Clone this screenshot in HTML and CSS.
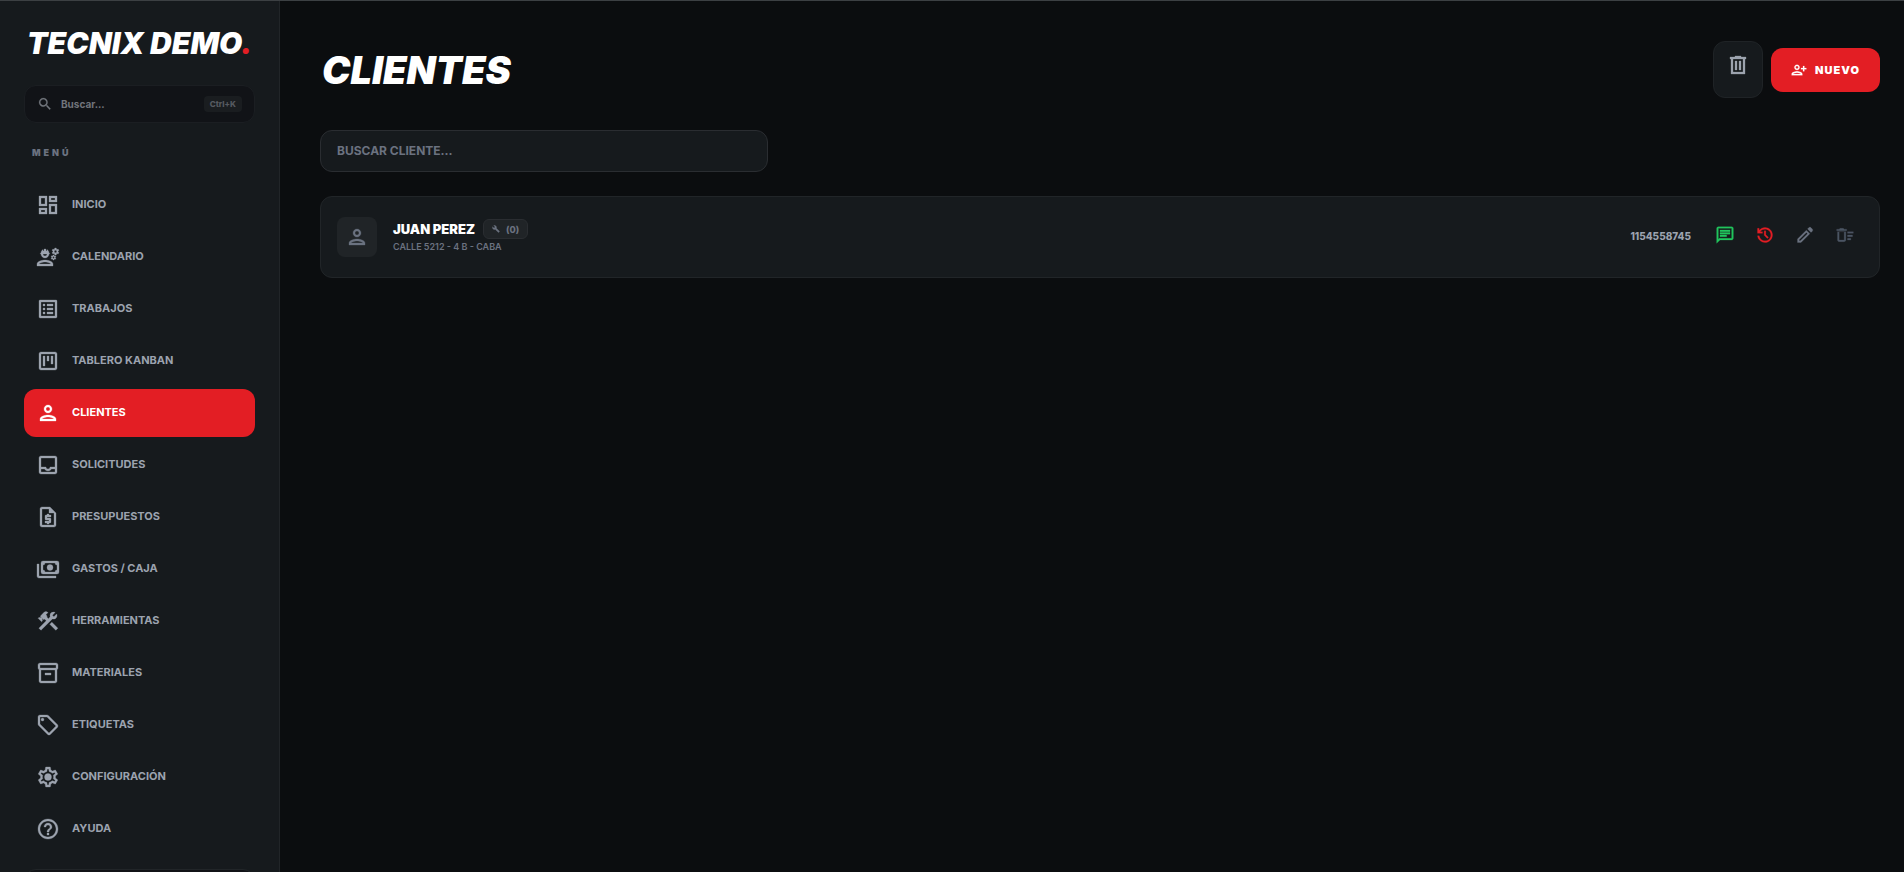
FILE: index.html
```html
<!DOCTYPE html>
<html lang="es">
<head>
    <meta charset="UTF-8">
    <meta name="viewport" content="width=device-width, initial-scale=1.0">
    <title>Tecnix Demo - Clientes</title>
    <link rel="stylesheet" href="styles.css">
</head>
<body>
    <div class="app">
        <aside class="sidebar">
            <a class="logo" href="#">TECNIX DEMO<span class="dot">.</span></a>

            <button class="quick-search" type="button">
                <svg class="icon icon-sm" viewBox="0 0 24 24"><path d="M15.5 14h-.79l-.28-.27A6.47 6.47 0 0 0 16 9.5 6.5 6.5 0 1 0 9.5 16c1.61 0 3.09-.59 4.23-1.57l.27.28v.79l5 4.99L20.49 19l-4.99-5zm-6 0C7.01 14 5 11.99 5 9.5S7.01 5 9.5 5 14 7.01 14 9.5 11.99 14 9.5 14z"/></svg>
                <span>Buscar...</span>
                <kbd>Ctrl+K</kbd>
            </button>

            <p class="menu-label">MENÚ</p>

            <nav class="menu">
                <a class="menu-item" href="#">
                    <svg class="icon" viewBox="0 0 24 24"><path d="M19 5v2h-4V5h4M9 5v6H5V5h4m10 8v6h-4v-6h4M9 17v2H5v-2h4M21 3h-8v6h8V3zM11 3H3v10h8V3zm10 8h-8v10h8V11zm-10 4H3v6h8v-6z"/></svg>
                    <span>INICIO</span>
                </a>
                <a class="menu-item" href="#">
                    <svg class="icon" viewBox="0 0 24 24"><path d="M9 15c-2.67 0-8 1.34-8 4v2h16v-2c0-2.66-5.33-4-8-4zm-6 4c.22-.72 3.31-2 6-2 2.7 0 5.8 1.29 6 2H3zM4.74 9H5c0 2.21 1.79 4 4 4s4-1.79 4-4h.26c.27 0 .49-.22.49-.49v-.02c0-.27-.22-.49-.49-.49H13c0-1.48-.81-2.75-2-3.45v.95c0 .28-.22.5-.5.5S10 5.78 10 5.5V4.14C9.68 4.06 9.35 4 9 4s-.68.06-1 .14V5.5c0 .28-.22.5-.5.5S7 5.78 7 5.5v-.95C5.81 5.25 5 6.52 5 8h-.26c-.27 0-.49.22-.49.49v.03c0 .26.22.48.49.48zM11 9c0 1.1-.9 2-2 2s-2-.9-2-2h4zM21.98 6.23l.93-.83-.75-1.3-1.19.39c-.14-.11-.3-.2-.47-.27L20.25 3h-1.5l-.25 1.22c-.17.07-.33.16-.48.27l-1.18-.39-.75 1.3.93.83c-.02.17-.02.35 0 .52l-.93.85.75 1.3 1.2-.38c.13.1.28.18.43.25l.28 1.23h1.5l.27-1.22c.16-.07.3-.15.44-.25l1.19.38.75-1.3-.93-.85c.03-.19.02-.36.01-.53zM19.5 7.75a1.25 1.25 0 1 1 0-2.5 1.25 1.25 0 0 1 0 2.5zM19.4 10.79l-.85.28c-.1-.08-.21-.14-.33-.19l-.18-.88h-1.07l-.18.87c-.12.05-.24.12-.34.19l-.84-.28-.54.93.66.59c-.01.13-.01.25 0 .37l-.66.61.54.93.86-.27c.1.07.2.13.31.18l.18.88h1.07l.19-.87c.11-.05.22-.11.32-.18l.85.27.54-.93-.66-.61c.01-.13.01-.25 0-.37l.66-.59-.53-.93zm-1.9 2.6a.89.89 0 1 1 0-1.78.89.89 0 0 1 0 1.78z"/></svg>
                    <span>CALENDARIO</span>
                </a>
                <a class="menu-item" href="#">
                    <svg class="icon" viewBox="0 0 24 24"><path d="M11 7h6v2h-6zm0 4h6v2h-6zm0 4h6v2h-6zM7 7h2v2H7zm0 4h2v2H7zm0 4h2v2H7zM20.1 3H3.9c-.5 0-.9.4-.9.9v16.2c0 .4.4.9.9.9h16.2c.4 0 .9-.5.9-.9V3.9c0-.5-.5-.9-.9-.9zM19 19H5V5h14v14z"/></svg>
                    <span>TRABAJOS</span>
                </a>
                <a class="menu-item" href="#">
                    <svg class="icon" viewBox="0 0 24 24"><path d="M19 3H5c-1.1 0-2 .9-2 2v14c0 1.1.9 2 2 2h14c1.1 0 2-.9 2-2V5c0-1.1-.9-2-2-2zm0 16H5V5h14v14zM7 7h2v10H7zm4 0h2v5h-2zm4 0h2v8h-2z"/></svg>
                    <span>TABLERO KANBAN</span>
                </a>
                <a class="menu-item active" href="#" aria-current="page">
                    <svg class="icon" viewBox="0 0 24 24"><path d="M12 6c1.1 0 2 .9 2 2s-.9 2-2 2-2-.9-2-2 .9-2 2-2m0 10c2.7 0 5.8 1.29 6 2H6c.23-.72 3.31-2 6-2m0-12C9.79 4 8 5.79 8 8s1.79 4 4 4 4-1.79 4-4-1.79-4-4-4zm0 10c-2.67 0-8 1.34-8 4v2h16v-2c0-2.66-5.33-4-8-4z"/></svg>
                    <span>CLIENTES</span>
                </a>
                <a class="menu-item" href="#">
                    <svg class="icon" viewBox="0 0 24 24"><path d="M19 3H5c-1.1 0-2 .9-2 2v14c0 1.1.9 2 2 2h14c1.1 0 2-.9 2-2V5c0-1.1-.9-2-2-2zm0 16H5v-3h3.56c.69 1.19 1.97 2 3.45 2s2.75-.81 3.45-2H19v3zm0-5h-4.99c0 1.1-.9 2-2 2s-2-.9-2-2H5V5h14v9z"/></svg>
                    <span>SOLICITUDES</span>
                </a>
                <a class="menu-item" href="#">
                    <svg class="icon" viewBox="0 0 24 24"><path d="M14 2H6c-1.1 0-2 .9-2 2v16c0 1.1.9 2 2 2h12c1.1 0 2-.9 2-2V8l-6-6zM6 20V4h7v4h5v12H6zm5-1h2v-1h1c.55 0 1-.45 1-1v-3c0-.55-.45-1-1-1h-3v-1h4v-2h-2V9h-2v1h-1c-.55 0-1 .45-1 1v3c0 .55.45 1 1 1h3v1H9v2h2v1z"/></svg>
                    <span>PRESUPUESTOS</span>
                </a>
                <a class="menu-item" href="#">
                    <svg class="icon" viewBox="0 0 24 24"><path fill-rule="evenodd" d="M7 4h14a2 2 0 0 1 2 2v9a2 2 0 0 1-2 2H7a2 2 0 0 1-2-2V6a2 2 0 0 1 2-2zm2 2a2 2 0 0 1-2 2v5a2 2 0 0 1 2 2h10a2 2 0 0 1 2-2V8a2 2 0 0 1-2-2H9zM1 7h2v12h17v2H3c-1.1 0-2-.9-2-2V7z"/><circle cx="14" cy="10.5" r="3"/></svg>
                    <span>GASTOS / CAJA</span>
                </a>
                <a class="menu-item" href="#">
                    <svg class="icon" viewBox="0 0 24 24"><path d="M13.78 15.3l6 6 2.11-2.16-6-6-2.11 2.16zM17.5 10.1c-.39 0-.81-.05-1.14-.19L4.97 21.25l-2.11-2.11 7.41-7.4-1.78-1.78-.7.7-1.45-1.41v2.86l-.7.7-3.52-3.56.7-.7h2.81l-1.4-1.41 3.56-3.56a2.976 2.976 0 0 1 4.22 0L9.89 5.74l1.41 1.4-.71.71 1.79 1.78 1.82-1.88c-.14-.33-.2-.75-.2-1.12a3.49 3.49 0 0 1 3.5-3.52c.59 0 1.11.14 1.58.42L16.41 6.2l1.5 1.5 2.67-2.67c.28.47.42.97.42 1.6 0 1.92-1.55 3.47-3.5 3.47z"/></svg>
                    <span>HERRAMIENTAS</span>
                </a>
                <a class="menu-item" href="#">
                    <svg class="icon" viewBox="0 0 24 24"><path d="M20 2H4c-1 0-2 .9-2 2v3.01c0 .72.43 1.34 1 1.69V20c0 1.1 1.1 2 2 2h14c.9 0 2-.9 2-2V8.7c.57-.35 1-.97 1-1.69V4c0-1.1-1-2-2-2zm-1 18H5V9h14v11zm1-13H4V4h16v3zM9 12h6v2H9z"/></svg>
                    <span>MATERIALES</span>
                </a>
                <a class="menu-item" href="#">
                    <svg class="icon" viewBox="0 0 24 24"><path d="M21.41 11.58l-9-9C12.05 2.22 11.55 2 11 2H4c-1.1 0-2 .9-2 2v7c0 .55.22 1.05.59 1.42l9 9c.36.36.86.58 1.41.58s1.05-.22 1.41-.59l7-7c.37-.36.59-.86.59-1.41s-.23-1.06-.59-1.42zM13 20.01L4 11V4h7v-.01l9 9-7 7.02z"/><circle cx="6.5" cy="6.5" r="1.5"/></svg>
                    <span>ETIQUETAS</span>
                </a>
                <a class="menu-item" href="#">
                    <svg class="icon" viewBox="0 0 24 24"><path d="M19.43 12.98c.04-.32.07-.64.07-.98s-.03-.66-.07-.98l2.11-1.65c.19-.15.24-.42.12-.64l-2-3.46a.5.5 0 0 0-.61-.22l-2.49 1c-.52-.4-1.08-.73-1.69-.98l-.38-2.65A.488.488 0 0 0 14 2h-4c-.25 0-.46.18-.49.42l-.38 2.65c-.61.25-1.17.59-1.69.98l-2.49-1a.5.5 0 0 0-.61.22l-2 3.46c-.13.22-.07.49.12.64l2.11 1.65c-.04.32-.07.65-.07.98s.03.66.07.98l-2.11 1.65c-.19.15-.24.42-.12.64l2 3.46c.12.22.39.3.61.22l2.49-1c.52.4 1.08.73 1.69.98l.38 2.65c.03.24.24.42.49.42h4c.25 0 .46-.18.49-.42l.38-2.65c.61-.25 1.17-.59 1.69-.98l2.49 1c.23.09.49 0 .61-.22l2-3.46c.12-.22.07-.49-.12-.64l-2.11-1.65zm-1.98-1.71c.04.31.05.52.05.73s-.02.43-.05.73l-.14 1.13.89.7 1.08.84-.7 1.21-1.27-.51-1.04-.42-.9.68c-.43.32-.84.56-1.25.73l-1.06.43-.16 1.13-.2 1.35h-1.4l-.19-1.35-.16-1.13-1.06-.43c-.43-.18-.83-.41-1.23-.71l-.91-.7-1.06.43-1.27.51-.7-1.21 1.08-.84.89-.7-.14-1.13c-.03-.31-.05-.54-.05-.74s.02-.43.05-.73l.14-1.13-.89-.7-1.08-.84.7-1.21 1.27.51 1.04.42.9-.68c.43-.32.84-.56 1.25-.73l1.06-.43.16-1.13.2-1.35h1.39l.19 1.35.16 1.13 1.06.43c.43.18.83.41 1.23.71l.91.7 1.06-.43 1.27-.51.7 1.21-1.07.85-.89.7.14 1.13z"/><circle cx="12" cy="12" r="3.5"/></svg>
                    <span>CONFIGURACIÓN</span>
                </a>
                <a class="menu-item" href="#">
                    <svg class="icon" viewBox="0 0 24 24"><path d="M11 18h2v-2h-2v2zm1-16C6.48 2 2 6.48 2 12s4.48 10 10 10 10-4.48 10-10S17.52 2 12 2zm0 18c-4.41 0-8-3.59-8-8s3.59-8 8-8 8 3.59 8 8-3.59 8-8 8zm0-14c-2.21 0-4 1.79-4 4h2c0-1.1.9-2 2-2s2 .9 2 2c0 2-3 1.75-3 5h2c0-2.25 3-2.5 3-5 0-2.21-1.79-4-4-4z"/></svg>
                    <span>AYUDA</span>
                </a>
            </nav>

            <div class="sidebar-footer"></div>
        </aside>

        <main class="content">
            <header class="page-header">
                <h1>CLIENTES</h1>
                <div class="header-actions">
                    <button class="trash-btn" type="button" aria-label="Papelera">
                        <svg class="icon" viewBox="0 0 24 24"><path fill-rule="evenodd" d="M5 21V6H4V4h5V3h6v1h5v2h-1v15H5zM7 6v13h10V6H7zm2 2h2v9H9V8zm4 0h2v9h-2V8z"/></svg>
                    </button>
                    <button class="new-btn" type="button">
                        <svg class="icon icon-sm" viewBox="0 0 24 24"><path d="M9 6c1.1 0 2 .9 2 2s-.9 2-2 2-2-.9-2-2 .9-2 2-2m0 10c2.7 0 5.8 1.29 6 2H3c.23-.72 3.31-2 6-2M9 4C6.79 4 5 5.79 5 8s1.79 4 4 4 4-1.79 4-4-1.79-4-4-4zm0 10c-2.67 0-8 1.34-8 4v2h16v-2c0-2.66-5.33-4-8-4zM18 6h2v3h3v2h-3v3h-2v-3h-3V9h3z"/></svg>
                        NUEVO
                    </button>
                </div>
            </header>

            <input class="client-search" type="search" placeholder="BUSCAR CLIENTE..." aria-label="Buscar cliente">

            <article class="client">
                <div class="avatar">
                    <svg class="icon" viewBox="0 0 24 24"><path d="M12 6c1.1 0 2 .9 2 2s-.9 2-2 2-2-.9-2-2 .9-2 2-2m0 10c2.7 0 5.8 1.29 6 2H6c.23-.72 3.31-2 6-2m0-12C9.79 4 8 5.79 8 8s1.79 4 4 4 4-1.79 4-4-1.79-4-4-4zm0 10c-2.67 0-8 1.34-8 4v2h16v-2c0-2.66-5.33-4-8-4z"/></svg>
                </div>
                <div class="client-info">
                    <div class="client-name">
                        <h2>JUAN PEREZ</h2>
                        <button class="jobs" type="button">
                            <svg class="icon icon-xs" viewBox="0 0 24 24"><path fill-rule="evenodd" d="M22.6 18.9l-9.1-9.1c.9-2.3.4-5-1.5-6.9-2-2-5-2.4-7.4-1.3L9 6 6 9 1.6 4.7C.4 7.1.9 10.1 2.9 12.1c1.9 1.9 4.6 2.4 6.9 1.5l9.1 9.1c.4.4 1 .4 1.4 0l2.3-2.3c.5-.4.5-1.1 0-1.5z"/></svg>
                            (0)
                        </button>
                    </div>
                    <p class="address">CALLE 5212 - 4 B - CABA</p>
                </div>
                <span class="phone">1154558745</span>
                <div class="client-actions">
                    <button class="chat" type="button" aria-label="Mensaje">
                        <svg class="icon icon-md" viewBox="0 0 24 24"><path d="M20 2H4c-1.1 0-2 .9-2 2v18l4-4h14c1.1 0 2-.9 2-2V4c0-1.1-.9-2-2-2zm0 14H5.17L4 17.17V4h16v12zM6 12h8v2H6zm0-3h12v2H6zm0-3h12v2H6z"/></svg>
                    </button>
                    <button class="history" type="button" aria-label="Historial">
                        <svg class="icon icon-md" viewBox="0 0 24 24"><path d="M12 21c-2.3 0-4.3-.8-6-2.3S3.3 15.3 3.05 13H5.1c.23 1.73 1 3.17 2.31 4.3S10.25 19 12 19c1.95 0 3.6-.68 4.96-2.04S19 13.95 19 12s-.68-3.6-2.04-4.96S13.95 5 12 5c-1.15 0-2.23.27-3.23.8S6.93 7.07 6.25 8H9v2H3V4h2v2.35c.85-1.07 1.89-1.89 3.11-2.48S10.63 3 12 3c1.25 0 2.42.24 3.51.71s2.04 1.12 2.85 1.93 1.46 1.76 1.93 2.85S21 10.75 21 12s-.24 2.42-.71 3.51-1.12 2.04-1.93 2.85-1.76 1.46-2.85 1.93S13.25 21 12 21zm2.8-4.8L11 12.4V7h2v4.6l3.2 3.2-1.4 1.4z"/></svg>
                    </button>
                    <button class="edit" type="button" aria-label="Editar">
                        <svg class="icon icon-md" viewBox="0 0 24 24"><path d="M5 19h1.4l8.63-8.63-1.4-1.4L5 17.6V19zM19.3 8.93l-4.25-4.2 1.4-1.4c.38-.39.85-.58 1.41-.58s1.03.19 1.42.58l1.4 1.4c.38.38.58.85.6 1.39s-.17 1-.55 1.39L19.3 8.93zM17.85 10.4L7.25 21H3v-4.25l10.6-10.6 4.25 4.25z"/></svg>
                    </button>
                    <button class="remove" type="button" aria-label="Eliminar">
                        <svg class="icon icon-md" viewBox="0 0 24 24"><path d="M15 16h4v2h-4zm0-8h7v2h-7zm0 4h6v2h-6zM3 18c0 1.1.9 2 2 2h6c1.1 0 2-.9 2-2V8H3v10zm2-10h6v10H5V8zm5-4H6L5 5H2v2h12V5h-3z" fill-rule="evenodd"/></svg>
                    </button>
                </div>
            </article>
        </main>
    </div>
</body>
</html>
```
FILE: styles.css
```css
* {
    box-sizing: border-box;
}
body {
    margin: 0;
    font-family: Inter, 'Liberation Sans', sans-serif;
    background: #0b0d0f;
    color: white;
}
button {
    font-family: inherit;
    color: inherit;
    background: none;
    border: none;
    padding: 0;
    cursor: pointer;
}
h1, h2, p {
    margin: 0;
}
.app {
    display: flex;
    height: 100vh;
    overflow: hidden;
    border-top: 1px solid #3c4043;
}
.icon {
    width: 24px;
    height: 24px;
    fill: currentColor;
    stroke: currentColor;
    stroke-width: 0.3;
    flex-shrink: 0;
}
.icon-md {
    width: 20px;
    height: 20px;
}
.icon-sm {
    width: 16px;
    height: 16px;
}
.icon-xs {
    width: 8px;
    height: 8px;
}

/* Sidebar */
.sidebar {
    width: 280px;
    flex-shrink: 0;
    padding: 24px;
    background: #161a1d;
    border-right: 1px solid #212528;
    overflow: hidden;
}
.logo {
    display: block;
    padding-left: 3px;
    font-size: 30px;
    line-height: 36px;
    font-weight: 900;
    font-style: italic;
    color: white;
    text-decoration: none;
    white-space: nowrap;
}
.dot {
    color: #e31e24;
}
.quick-search {
    display: flex;
    align-items: center;
    gap: 8px;
    width: 100%;
    height: 38px;
    margin-top: 24px;
    padding: 0 12px;
    border: 1px solid #1b1e22;
    border-radius: 12px;
    background: #111317;
    color: #71757c;
    font-size: 10px;
    font-weight: 700;
}
.quick-search kbd {
    margin-left: auto;
    padding: 0 6px;
    border-radius: 4px;
    background: #1a1d20;
    color: #565a60;
    font-family: inherit;
    font-size: 8px;
    line-height: 16px;
    font-weight: 800;
}
.menu-label {
    margin: 24px 0 22px 8px;
    font-size: 9px;
    line-height: 12px;
    font-weight: 900;
    letter-spacing: 3px;
    color: #6b7280;
}
.menu {
    display: flex;
    flex-direction: column;
    gap: 4px;
}
.menu-item {
    display: flex;
    align-items: center;
    gap: 12px;
    height: 48px;
    padding: 0 12px;
    border-radius: 12px;
    color: #9ca3af;
    font-size: 11px;
    font-weight: 700;
    text-decoration: none;
}
.menu-item span {
    padding-bottom: 2px;
}
.menu-item.active {
    background: #e31e24;
    color: white;
}
.sidebar-footer {
    height: 48px;
    margin-top: 16px;
    border: 1px solid #212528;
    border-radius: 12px;
    background: #111317;
}

/* Main content */
.content {
    flex: 1;
    padding: 40px 24px 40px 40px;
}
.page-header {
    display: flex;
    align-items: center;
    justify-content: space-between;
    margin-bottom: 32px;
}
h1 {
    padding-left: 2px;
    font-size: 38px;
    line-height: 40px;
    font-weight: 900;
    font-style: italic;
}
.header-actions {
    display: flex;
    align-items: center;
    gap: 8px;
}
.trash-btn {
    width: 50px;
    height: 57px;
    padding-bottom: 6px;
    border: 1px solid #1f2326;
    border-radius: 12px;
    background: #161a1d;
    color: #9ca3af;
}
.new-btn {
    display: flex;
    align-items: center;
    gap: 8px;
    height: 44px;
    padding: 0 20px;
    border-radius: 12px;
    background: #e31e24;
    font-size: 11px;
    font-weight: 900;
    letter-spacing: 1px;
}
.client-search {
    display: block;
    width: 448px;
    max-width: 100%;
    height: 42px;
    margin-bottom: 24px;
    padding: 0 16px 2px;
    border: 1px solid #2a2d31;
    border-radius: 12px;
    background: #161a1d;
    color: white;
    font-family: inherit;
    font-size: 12px;
    font-weight: 700;
}
.client-search::placeholder {
    color: #6b7280;
}
.client {
    display: flex;
    align-items: center;
    padding: 20px 16px;
    border: 1px solid #212528;
    border-radius: 12px;
    background: #161a1d;
}
.avatar {
    display: flex;
    align-items: center;
    justify-content: center;
    width: 40px;
    height: 40px;
    margin-right: 16px;
    border-radius: 8px;
    background: #202427;
    color: #6b7280;
}
.client-info {
    flex: 1;
}
.client-name {
    display: flex;
    align-items: center;
    gap: 8px;
}
h2 {
    font-size: 13px;
    line-height: 20px;
    font-weight: 900;
}
.jobs {
    display: flex;
    align-items: center;
    gap: 6px;
    height: 20px;
    padding: 0 8px;
    border: 1px solid #2a2d31;
    border-radius: 6px;
    background: #202427;
    color: #6b7280;
    font-size: 9px;
    font-weight: 800;
}
.address {
    font-size: 9px;
    line-height: 16px;
    font-weight: 600;
    color: #6b7280;
}
.phone {
    margin-right: 16px;
    padding-bottom: 2px;
    font-size: 10px;
    font-weight: 800;
    color: #9ca3af;
}
.client-actions {
    display: flex;
    gap: 4px;
}
.client-actions button {
    display: flex;
    padding: 6px 8px 10px;
}
.chat {
    color: #22c55e;
}
.history {
    color: #e31e24;
}
.edit {
    color: #6b7280;
}
.remove {
    color: #4b5563;
}
```
